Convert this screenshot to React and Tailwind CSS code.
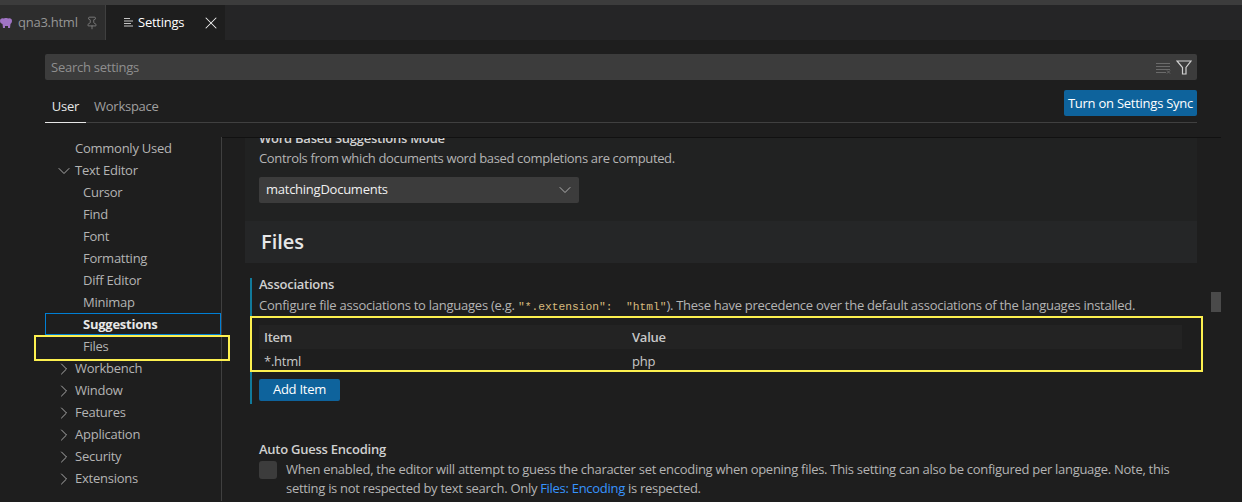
import { ChevronDown, ChevronRight, Pin, X } from 'lucide-react';

const font = "font-['Open_Sans','Noto_Sans',sans-serif]";

const TocRow = ({ label, chevron, indent, active }) => (
  <div
    className={`h-[22px] flex items-center pt-[2px] text-[13px] tracking-[-0.25px] relative ${
      active ? 'pl-[37px] border border-[#007fd4] font-bold text-[#e7e7e7]' : indent ? 'pl-[38px] text-[#b4b4b4]' : 'pl-[30px] text-[#b4b4b4]'
    }`}
  >
    {chevron === 'down' && <ChevronDown className="absolute left-[9px] w-5 h-5 text-[#c5c5c5]" strokeWidth={1} />}
    {chevron === 'right' && <ChevronRight className="absolute left-[9px] w-5 h-5 text-[#c5c5c5]" strokeWidth={1} />}
    {label}
  </div>
);

const toc = [
  { label: 'Commonly Used' },
  { label: 'Text Editor', chevron: 'down' },
  { label: 'Cursor', indent: true },
  { label: 'Find', indent: true },
  { label: 'Font', indent: true },
  { label: 'Formatting', indent: true },
  { label: 'Diff Editor', indent: true },
  { label: 'Minimap', indent: true },
  { label: 'Suggestions', indent: true, active: true },
  { label: 'Files', indent: true },
  { label: 'Workbench', chevron: 'right' },
  { label: 'Window', chevron: 'right' },
  { label: 'Features', chevron: 'right' },
  { label: 'Application', chevron: 'right' },
  { label: 'Security', chevron: 'right' },
  { label: 'Extensions', chevron: 'right' },
];

const Code = ({ children }) => (
  <span className="font-['Liberation_Mono',monospace] text-[11.25px] tracking-normal whitespace-pre text-[#d7ba7d]">{children}</span>
);

export default function App() {
  return (
    <div className={`relative w-[1242px] h-[502px] overflow-hidden bg-[#1e1e1e] ${font}`}>
      <div className="h-[5px] bg-[#3c3c3c]" />

      {/* Tabs */}
      <div className="h-[35px] flex bg-[#252526]">
        <div className="w-[106px] flex items-center pt-px bg-[#2d2d2d] border-r border-[#3f3f3f] text-[13px] tracking-[-0.25px] text-[#969696]">
          <svg width="12" height="10" viewBox="0 0 12 10" className="shrink-0 text-[#a074c4]" fill="currentColor">
            <path d="M0 3 C0 1 1.5 0 3.5 0.5 C5 -0.2 7 -0.2 8.5 0.5 C10.5 0 12 1 12 3 C12 4.5 11 5.5 10.5 6 L10 10 L8 10 L8 8 L5 8 L5 10 L3 10 L2.5 6 C1 5.5 0 4.5 0 3 Z" />
          </svg>
          <span className="ml-[6px]">qna3.html</span>
          <Pin className="ml-[7px] w-[14px] h-[14px]" strokeWidth={1.2} />
        </div>
        <div className="w-[119px] flex items-center pt-px bg-[#1e1e1e] text-[13px] tracking-[-0.25px] text-white">
          <svg width="12" height="12" viewBox="0 0 12 12" className="ml-[17px] text-[#c5c5c5]" fill="currentColor">
            <rect x="1" y="1" width="6" height="1" />
            <rect x="1" y="3.5" width="9" height="1" />
            <rect x="1" y="6" width="7" height="1" />
            <rect x="1" y="8.5" width="9" height="1" />
          </svg>
          <span className="ml-[3px]">Settings</span>
          <X className="ml-[17px] w-5 h-5 text-[#f0f0f0]" strokeWidth={1.25} />
        </div>
      </div>

      {/* Search and scope */}
      <div className="ml-[45px] w-[1152px] pt-[14px]">
        <div className="h-[26px] flex items-center justify-between rounded-[2px] bg-[#3c3c3c] pl-[6px] pr-[5px] pt-px text-[13px] tracking-[-0.25px] text-[#8f8f8f]">
          <span>Search settings</span>
          <div className="flex items-center gap-[5px]">
            <svg width="16" height="12" viewBox="0 0 16 12" fill="none" stroke="#6b6b6b">
              <path d="M1 1.5h14M1 4.5h14M1 7.5h14M1 10.5h10" />
              <path d="M12 8.5l3 3M15 8.5l-3 3" />
            </svg>
            <svg width="16" height="15" viewBox="0 0 16 15" fill="none" stroke="#d0d0d0" strokeWidth="1.2">
              <path d="M1 1h14L10 7.5V14H6.5V7.5z" />
            </svg>
          </div>
        </div>
        <div className="h-[43px] flex justify-between items-end border-b border-[#404040] text-[13px] tracking-[-0.25px]">
          <div className="flex h-[32px] text-[#a0a0a0]">
            <div className="w-[41px] h-[33px] pt-[7px] border-b border-[#e7e7e7] text-center text-[#e7e7e7]">User</div>
            <div className="ml-[8px] pt-[7px]">Workspace</div>
          </div>
          <button className="mb-[6px] w-[133px] h-[26px] pt-px rounded-[2px] bg-[#0e639c] text-white whitespace-nowrap">Turn on Settings Sync</button>
        </div>
      </div>

      <div className="flex h-[378px]">
        {/* TOC */}
        <div className="ml-[45px] w-[177px] mt-[14px] border-r border-[#404040]">
          {toc.map((t) => (
            <TocRow key={t.label} {...t} />
          ))}
        </div>

        {/* Settings list */}
        <div className="relative flex-1">
          <div className="absolute left-0 top-[14px] w-[999px] h-px bg-[#111111]" />
          <div className="mt-[15px] h-[363px] pl-[23px] overflow-hidden">
            <div className="w-[952px] -mt-[13px] text-[13px] tracking-[-0.25px]">
              <div className="h-[96px] bg-[#212222] pl-[14px]">
                <div className="h-[29px] leading-[28px] font-semibold text-[#d0d0d0] translate-y-[-1px]">Word Based Suggestions Mode</div>
                <div className="text-[#b4b4b4] leading-[18px] -mt-[5px] tracking-[-0.35px]">Controls from which documents word based completions are computed.</div>
                <div className="mt-[10px] w-[320px] h-[26px] flex items-center justify-between rounded-[2px] bg-[#3c3c3c] pl-[7px] pr-[4px] text-[#f0f0f0]">
                  matchingDocuments
                  <ChevronDown className="w-5 h-5 text-[#c5c5c5]" strokeWidth={1} />
                </div>
              </div>
              <div className="h-[42px] flex items-center pl-[16px] bg-[#252627] text-[20px] tracking-normal font-semibold text-[#e7e7e7]">Files</div>
            </div>

            <div className="flex flex-col w-[952px] mt-[15px] text-[13px] tracking-[-0.25px] border-l-2 border-[#117a9b] ml-[5px] h-[126px] pl-[7px]">
              <div className="h-[18px] leading-[18px] font-semibold text-[#d0d0d0] -mt-[3px]">Associations</div>
              <div className="mt-[3px] h-[18px] leading-[18px] text-[#b4b4b4] whitespace-nowrap">
                Configure file associations to languages (e.g. <Code>{'"*.extension":  "html"'}</Code><span className="tracking-[-0.28px]">). These have precedence over the default associations of the languages installed.</span>
              </div>
              <div className="mt-[11px] w-[923px] text-[13px] text-[#c8c8c8]">
                <div className="h-[24px] flex items-center pt-[2px] bg-[#232323] font-semibold">
                  <span className="w-[373px] pl-[5px]">Item</span>
                  <span>Value</span>
                </div>
                <div className="h-[24px] flex items-center pt-[2px]">
                  <span className="w-[373px] pl-[5px]">*.html</span>
                  <span>php</span>
                </div>
              </div>
              <button className="mt-[6px] w-[81px] h-[22px] shrink-0 rounded-[2px] bg-[#0e639c] text-white">Add Item</button>
            </div>

            <div className="ml-[14px] mt-[36px] w-[938px] text-[13px] tracking-[-0.25px]">
              <div className="leading-[18px] font-semibold text-[#d0d0d0]">Auto Guess Encoding</div>
              <div className="mt-[2px] flex">
                <div className="mt-px w-[18px] h-[18px] shrink-0 rounded-[3px] bg-[#3c3c3c]" />
                <p className="ml-[9px] leading-[19px] tracking-[-0.29px] text-[#b4b4b4]">
                  When enabled, the editor will attempt to guess the character set encoding when opening files. This setting can also be configured per language. Note, this setting is not respected by text search. Only <span className="text-[#3794ff]">Files: Encoding</span> is respected.
                </p>
              </div>
            </div>
          </div>
        </div>
      </div>

      {/* Scrollbar slider */}
      <div className="absolute left-[1211px] top-[292px] w-[10px] h-[20px] bg-[#4a4a4a]" />

      {/* Yellow annotations */}
      <div className="absolute left-[34px] top-[335px] w-[196px] h-[26px] border-2 border-[#fdf04f]" />
      <div className="absolute left-[250px] top-[316px] w-[953px] h-[56px] border-2 border-[#fdf04f]" />
    </div>
  );
}
